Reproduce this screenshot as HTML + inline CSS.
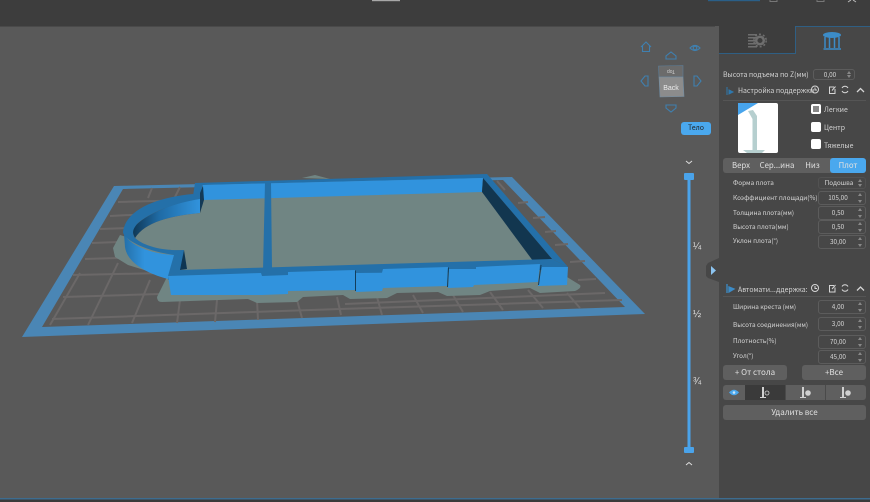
<!DOCTYPE html>
<html><head><meta charset="utf-8">
<style>
html,body{margin:0;padding:0;width:870px;height:502px;overflow:hidden;background:#595959;font-family:"Noto Sans CJK SC","Liberation Sans",sans-serif;}
#a{position:relative;width:870px;height:502px;overflow:hidden;filter:blur(.3px)}
.t{position:absolute;color:#d4d4d4;font-size:6.4px;line-height:10px;white-space:nowrap}
.h{font-size:6.9px}
.f{position:absolute;left:818px;width:46px;height:12px;border:1px solid #5c5c5c;border-radius:3px;box-sizing:content-box;color:#d4d4d4;font-size:6.4px;line-height:12px;text-align:center;text-indent:-8px}
.f:after{content:"";position:absolute;right:3px;top:1px;width:0;height:0;border-left:2.5px solid transparent;border-right:2.5px solid transparent;border-bottom:3px solid #888}
.f:before{content:"";position:absolute;right:3px;bottom:1px;width:0;height:0;border-left:2.5px solid transparent;border-right:2.5px solid transparent;border-top:3px solid #888}
.b{position:absolute;background:#5f5f5f;border-radius:3px;color:#e0e0e0;font-size:8px;text-align:center;line-height:15px;white-space:nowrap}
.c{position:absolute;left:811px;width:10px;height:10px;background:#fff;border-radius:2px}
</style></head><body><div id="a">
<svg width="870" height="502" style="position:absolute;left:0;top:0">
<defs>
<linearGradient id="g1" gradientUnits="userSpaceOnUse" x1="132" x2="200" y1="0" y2="0"><stop offset="0" stop-color="#0f3653"/><stop offset=".4" stop-color="#1f6ba5"/><stop offset="1" stop-color="#3193dd"/></linearGradient>
<linearGradient id="g2" gradientUnits="userSpaceOnUse" x1="124" x2="165" y1="0" y2="0"><stop offset="0" stop-color="#2470a9"/><stop offset=".5" stop-color="#3193dd"/></linearGradient>
</defs>
<rect width="870" height="502" fill="#595959"/>
<!-- plate -->
<path fill-rule="evenodd" fill="#4a86b5" d="M114 186L512 177L645 314L22 337ZM123 189L42 327L625 307L503 180Z"/>
<g stroke="#6b6868" stroke-width="2" fill="none">
<path d="M118 202L195 200M110 216L150 214M100 229L130 228M92 243L118 242M85 259L118 258M73 275L165 273M63 297L160 294M52 319L340 309L622 300M345 304L605 293"/>
<path d="M518 203L528 202M533 218L545 217M545 232L556 231M555 245L568 244M570 262L585 261M578 280L596 279"/>
<path d="M497 181L505 190M152 188L148 198M180 187L175 197"/>
<path d="M80 273L50 325M118 263L88 325M150 280L132 323M180 300L177 323M217 300L215 322M257 300L258 320M297 300L302 318M337 297L341 315M377 297L382 315M413 295L423 313M453 295L463 312M490 292L503 310M528 290L543 308M567 293L580 308"/>
</g>
<!-- top raft peak behind -->
<path fill="#708583" d="M302 178L315 175L330 179Z"/>
<!-- raft -->
<path fill="#708583" d="M120 235L113 248L115 257L128 265L167 277L157 297Q157 302 162 302L248 299L257 303L297 302L303 297L343 295L350 299L387 298L397 293L438 292L447 296L480 295L490 291L530 288L540 293L575 291Q582 288 580 285L567 277L540 260L170 250Z"/>
<!-- floor -->
<path fill="#708583" d="M203 199L482 191L534 261L187 270L183 250C165 251 145 247 135 238C145 222 170 216 200 213Z"/>
<!-- arch -->
<path fill="url(#g1)" d="M132 231C136 221 160 206 200 198L200 213C170 216 145 222 135 238Z"/>
<path fill="url(#g2)" d="M124 234C130 245 150 254 175 255L168 279C145 273 127 262 125 247Z"/>
<path fill="#2470a9" d="M193 194C160 197 126 208 123 232C124 241 150 252 174 255L168 276L181 270L184 250C165 251 145 247 135 238C131 232 134 228 137 224C150 212 175 203 200 199Z"/>
<path fill="#0f3653" d="M184 250L187 269L180 270Z"/>
<!-- back wall -->
<path fill="#2470a9" d="M195 183L487 174L568 267L552 259L483 178L203 185Z"/>
<path fill="#2470a9" d="M195 183L203 183L200 199L193 196Z"/>
<path fill="#3193dd" d="M203 185L483 178L482 192L203 200Z"/>
<path fill="#133a57" d="M200 193L203 186L204 200L200 213Z"/>
<path fill="#12364f" d="M483 178L552 259L533 261L482 192Z"/>
<!-- divider -->
<path fill="#2470a9" d="M265 182H271L272 269L263 271Z"/>
<!-- front wall top -->
<path fill="#2470a9" d="M168 276L180 270L552 259L568 267L540 270L355 275L168 280Z"/>
<path fill="#2470a9" d="M261 273L262 270H288V273Z"/>
<!-- front wall faces -->
<path fill="#3193dd" d="M168 276L261 273L262 276L288 275L288 272L355 270L355 290L288 291L288 294L262 295L171 295Z"/>
<path fill="#3193dd" d="M356 273L382 272.700L383 269L448 267L447 286L383 288L382 291L356 292Z"/>
<path fill="#3193dd" d="M449 269L476 269L476 267L540 264L538 282L474 285L473 287L448 288Z"/>
<path fill="#3193dd" d="M542 267L568 267L567 285L538 286Z"/>
<path stroke="#123d5c" stroke-width="1" fill="none" d="M355.500 270.500L355.500 291M448.500 267.500L447.500 287M541 265L538.500 285"/>
<!-- panel -->
<rect x="0" y="0" width="870" height="26" fill="#3d3d3d"/>
<rect x="0" y="26" width="715" height="1" fill="#4a4a4a"/>
<rect x="715" y="26" width="155" height="476" fill="#474747"/>
<rect x="715" y="26" width="4" height="476" fill="#595959"/>
<rect x="719" y="26" width="76" height="28" fill="#3d3d3d"/>
<path d="M719 53.500H795.500V26.500H870" fill="none" stroke="#2f5f84" stroke-width="1"/>
<rect x="0" y="498" width="870" height="1.500" fill="#3d6c8f"/>
<rect x="0" y="499.500" width="870" height="3" fill="#3a3a3a"/>
<!-- top bits -->
<rect x="372" y="0" width="28" height="1.200" fill="#a8a8a8"/>
<rect x="708" y="0" width="52" height="1.200" fill="#2a5f88"/>
<path d="M770 0v1.500h7V0M817 0v1.500h7V0" stroke="#777" fill="none"/>
<path d="M848 2l3-2M856 2l-3-2" stroke="#bbb" fill="none"/>
<!-- tab icons -->
<g fill="#6e6e6e"><rect x="748" y="34" width="9" height="1.500"/><rect x="748" y="37" width="9" height="1.500"/><rect x="748" y="40" width="8" height="1.500"/><rect x="748" y="43" width="8" height="1.500"/><rect x="748" y="46" width="9" height="1.500"/></g>
<circle cx="760" cy="40.500" r="3.800" fill="none" stroke="#6e6e6e" stroke-width="2.500"/>
<circle cx="760" cy="40.500" r="6.200" fill="none" stroke="#6e6e6e" stroke-width="1.500" stroke-dasharray="2 2"/>
<ellipse cx="832" cy="35" rx="9" ry="3" fill="#3c8cc8"/>
<path d="M825 37V48M829.500 37V48M834.500 37V48M839 37V48M823.500 49H841" stroke="#3c8cc8" stroke-width="1.500" fill="none"/>
<!-- picture -->
<rect x="738" y="103" width="40" height="50" rx="2" fill="#fff"/>
<path d="M738 103H758L738 115Z" fill="#48a4ec"/>
<path d="M748 111L753 110L757 116V150H752.500V119Z" fill="#b6cfcf"/>
<path d="M743 150H765L762 153H747Z" fill="#b6cfcf"/>
<!-- section icons -->
<path d="M727 87V95M729 90L733 92L729 94Z" stroke="#2f78ad" fill="#2f78ad"/>
<path d="M727 284V293M729 287L734 289L729 292Z" stroke="#3c8cc8" stroke-width="1.300" fill="#3c8cc8"/>
<g fill="none" stroke="#d6d6d6" stroke-width="1">
<circle cx="815" cy="89.500" r="3.500"/><path d="M815 87.500V90L817 90"/>
<path d="M834 87H829.500V93.500H835V89M832 90.500L835.500 86.500"/>
<path d="M848 88A3.500 3.500 0 0 0 842 88M842 91A3.500 3.500 0 0 0 848 91"/>
<path d="M857 92L860.500 88.500L864 92" stroke-width="1.300"/>
<circle cx="815" cy="288" r="3.500"/><path d="M815 286V288.500L817 288.500"/>
<path d="M834 285.500H829.500V292H835V287.500M832 289L835.500 285"/>
<path d="M848 286.500A3.500 3.500 0 0 0 842 286.500M842 289.500A3.500 3.500 0 0 0 848 289.500"/>
<path d="M857 290.500L860.500 287L864 290.500" stroke-width="1.300"/>
</g>
<rect x="723" y="100" width="143" height="1" fill="#555"/>
<rect x="723" y="296" width="143" height="1" fill="#555"/>
<!-- nav icons -->
<g fill="none" stroke="#3f80b0" stroke-width="1.100">
<path d="M641 47L646 42L651 47M642.500 46V51.500H649.500V46"/>
<path d="M690 48Q695 43 700 48Q695 53 690 48Z"/><circle cx="695" cy="48" r="1.800"/>
<path d="M666 59V56L671 52L676 56V59Z"/>
<path d="M666 105V108L671 112L676 108V105Z"/>
<path d="M648 76H645L641 81L645 86H648Z"/>
<path d="M694 76H697L701 81L697 86H694Z"/>
</g>
<!-- cube -->
<path d="M658.500 66L683 65.500L683 77L659 77Z" fill="#6b6b6b" stroke="#5d7f9a" stroke-width=".6"/>
<path d="M659 77L683 77L684 96.500L660 97Z" fill="#8c8c8c" stroke="#6f8ea6" stroke-width=".6"/>
<text x="671" y="72" text-anchor="middle" font-size="5" fill="#d0d0d0" font-family="Liberation Sans" transform="rotate(180 671 71)">Top</text>
<text x="671" y="90" text-anchor="middle" font-size="7" fill="#eee" font-family="Liberation Sans">Back</text>
<!-- slider -->
<rect x="687.500" y="176" width="3" height="274" fill="#4aa3ea"/>
<rect x="684" y="173" width="10" height="7" rx="1" fill="#4aa3ea"/>
<rect x="684" y="447" width="10" height="6" rx="1" fill="#4aa3ea"/>
<path d="M686 161L689 163.500L692 161M686 465L689 462.500L692 465" stroke="#ddd" fill="none"/>
<text x="697" y="249" text-anchor="middle" font-size="10" fill="#ddd" font-family="Liberation Sans">¼</text>
<text x="697" y="317" text-anchor="middle" font-size="10" fill="#ddd" font-family="Liberation Sans">½</text>
<text x="697" y="384" text-anchor="middle" font-size="10" fill="#ddd" font-family="Liberation Sans">¾</text>
<!-- side toggle -->
<path d="M719 258L708 263L706 266V276L708 278L719 282Z" fill="#474747"/>
<path d="M711 266L716 270.500L711 275Z" fill="#8cc4f0"/>
</svg>
<div class="b" style="left:681px;top:122px;width:30px;height:13px;line-height:13px;background:#4aa8ee;color:#222;font-size:7px">Тело</div>
<div class="t h" style="left:723px;top:69px">Высота подъема по Z(мм)</div>
<div class="f" style="left:813px;top:69px;width:40px;height:9px;line-height:9px">0,00</div>
<div class="t h" style="left:738px;top:85px">Настройка поддержки</div>
<div class="c" style="top:104px"></div><div style="position:absolute;left:813px;top:106px;width:6px;height:6px;background:#888"></div>
<div class="t h" style="left:824px;top:104px">Легкие</div>
<div class="c" style="top:122px"></div><div class="t h" style="left:824px;top:122px">Центр</div>
<div class="c" style="top:139px"></div><div class="t h" style="left:824px;top:140px">Тяжелые</div>
<div class="b" style="left:723px;top:158px;width:143px;height:15px;border-radius:3px"></div>
<div class="b" style="left:723px;top:158px;width:36px;height:15px;background:none;font-size:7.800px">Верх</div>
<div class="b" style="left:759px;top:158px;width:36px;height:15px;background:none;font-size:7.800px">Сер...ина</div>
<div class="b" style="left:795px;top:158px;width:35px;height:15px;background:none;font-size:7.800px">Низ</div>
<div class="b" style="left:830px;top:158px;width:36px;height:15px;background:#4aa8ee;font-size:7.800px">Плот</div>
<div class="t" style="left:733px;top:178px">Форма плота</div>
<div class="f" style="top:177px;height:10px;line-height:10px;border-color:#525252;text-indent:-6px">Подошва</div>
<div class="t" style="left:733px;top:193px">Коэффициент площади(%)</div><div class="f" style="top:191px">105,00</div>
<div class="t" style="left:733px;top:208px">Толщина плота(мм)</div><div class="f" style="top:206px">0,50</div>
<div class="t" style="left:733px;top:222px">Высота плота(мм)</div><div class="f" style="top:220px">0,50</div>
<div class="t" style="left:733px;top:236px">Уклон плота(°)</div><div class="f" style="top:235px">30,00</div>
<div class="t h" style="left:738px;top:284px">Автомати...ддержка:</div>
<div class="t" style="left:733px;top:302px">Ширина креста (мм)</div><div class="f" style="top:300px">4,00</div>
<div class="t" style="left:733px;top:320px">Высота соединения(мм)</div><div class="f" style="top:317px">3,00</div>
<div class="t" style="left:733px;top:336px">Плотность(%)</div><div class="f" style="top:335px">70,00</div>
<div class="t" style="left:733px;top:351px">Угол(°)</div><div class="f" style="top:350px">45,00</div>
<div class="b" style="left:723px;top:365px;width:64px;height:15px">+ От стола</div>
<div class="b" style="left:802px;top:365px;width:64px;height:15px">+Все</div>
<div class="b" style="left:723px;top:385px;width:143px;height:15px"></div>
<div class="b" style="left:745px;top:385px;width:40px;height:15px;background:#3a3a3a;border-radius:0"></div>
<svg width="870" height="502" style="position:absolute;left:0;top:0">
<path d="M729 392.500Q734 387 739 392.500Q734 398 729 392.500Z" fill="#4aa8ee"/><circle cx="734" cy="392.500" r="1.300" fill="#cfe8fa"/>
<g fill="#d0d0d0"><rect x="762" y="387" width="2" height="10"/><rect x="760" y="397" width="6" height="1"/><rect x="802" y="387" width="2" height="10"/><rect x="800" y="397" width="6" height="1"/><rect x="842" y="387" width="2" height="10"/><rect x="840" y="397" width="6" height="1"/>
<circle cx="808" cy="393" r="2.800"/><circle cx="848" cy="393" r="2.800"/></g>
<circle cx="767" cy="393" r="2" fill="none" stroke="#d0d0d0" stroke-width=".8"/>
<rect x="785" y="385" width="1" height="15" fill="#4a4a4a"/><rect x="825" y="385" width="1" height="15" fill="#4a4a4a"/>
</svg>
<div class="b" style="left:723px;top:405px;width:143px;height:15px">Удалить все</div>
</div></body></html>
